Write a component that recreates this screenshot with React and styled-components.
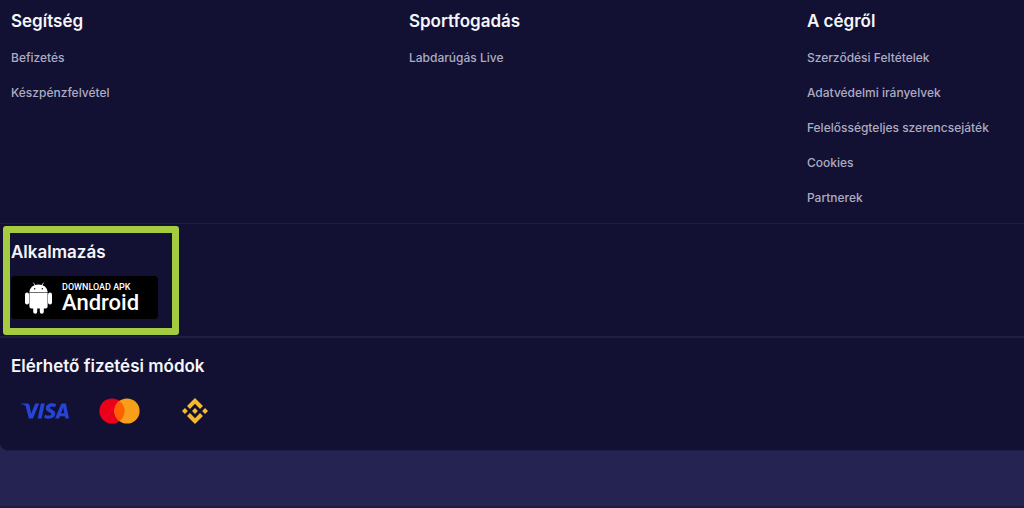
import React from 'react'
import styled, { createGlobalStyle } from 'styled-components'
import { SiBinance, SiVisa } from 'react-icons/si'

const GlobalStyle = createGlobalStyle`
  * {
    box-sizing: border-box;
  }

  body {
    margin: 0;
    background: #252352;
    font-family: Inter, 'Liberation Sans', sans-serif;
  }
`

const Page = styled.div`
  min-height: 100vh;
  display: flex;
  flex-direction: column;
  border-bottom: 2px solid #1f1b40;
`

const Footer = styled.footer`
  background: #121133;
  border-bottom: 1px solid #1f1d47;
  border-bottom-left-radius: 8px;
  color: #f6f6fa;
`

const Columns = styled.nav`
  display: grid;
  grid-template-columns: 11fr 11fr 6fr;
  padding: 9px 0 15px 11px;
`

const Title = styled.h2`
  margin: 0;
  font-size: 17px;
  font-weight: 600;
  line-height: 24px;
  white-space: nowrap;
`

const LinkList = styled.ul`
  display: flex;
  flex-direction: column;
  gap: 15px;
  list-style: none;
  margin: 15px 0 0;
  padding: 0;
`

const Item = styled.li`
  line-height: 20px;
`

const FooterLink = styled.a`
  display: block;
  color: #adacc2;
  font-size: 12px;
  font-weight: 500;
  text-decoration: none;
  white-space: nowrap;

  &:hover {
    color: #fff;
  }
`

const AppSection = styled.section`
  display: flex;
  border-top: 1px solid #1e1d40;
  border-bottom: 2px solid #201f43;
  padding: 2px 3px 1px;
`

const Highlight = styled.div`
  border: 7px solid #a5cb40;
  border-radius: 3px;
  padding: 7px 14px 9px 1px;
`

const ApkButton = styled.button`
  display: flex;
  align-items: center;
  gap: 10px;
  width: 147px;
  height: 43px;
  margin-top: 12px;
  padding: 0 0 0 14px;
  border: 0;
  border-radius: 4px;
  background: #000;
  color: #fff;
  font-family: Roboto, sans-serif;
  text-align: left;
  cursor: pointer;
`

const ApkLabel = styled.span`
  display: flex;
  flex-direction: column;
  font-size: 9px;
  font-weight: 500;
  line-height: 10px;
  white-space: nowrap;
`

const ApkName = styled.span`
  font-size: 22px;
  line-height: 22px;
`

const Payments = styled.section`
  padding: 16px 0 25px 11px;
`

const PaymentList = styled.ul`
  display: flex;
  align-items: center;
  list-style: none;
  margin: 19px 0 0;
  padding: 0 0 0 10px;
`

const Payment = styled.li`
  display: flex;
  align-items: center;
  height: 28px;
  margin-right: ${props => props.$space || 0}px;
  color: ${props => props.$color};
`

const VisaIcon = styled(SiVisa)`
  width: 48px;
  height: 48px;
`

const BinanceIcon = styled(SiBinance)`
  width: 26px;
  height: 26px;
`

const AndroidIcon = () => (
  <svg width="27" height="32" viewBox="0 0 27 32" fill="#fff" aria-hidden="true">
    <path d="M8.6 1l2 3M18.4 1l-2 3" stroke="#fff" strokeWidth="0.8" strokeLinecap="round" />
    <path d="M4.4 10.200C4.600 5.400 8.500 2.400 13.500 2.400S22.400 5.400 22.600 10.200z" />
    <circle cx="9.700" cy="6.700" r="0.700" fill="#000" />
    <circle cx="17.300" cy="6.700" r="0.700" fill="#000" />
    <rect x="0" y="10.400" width="4" height="12" rx="2" />
    <rect x="23" y="10.400" width="4" height="12" rx="2" />
    <path d="M4.400 10.800h18.200v13.600a2 2 0 0 1-2 2H18.800v3.400a2 2 0 0 1-4 0v-3.400h-2.600v3.400a2 2 0 0 1-4 0v-3.400H6.400a2 2 0 0 1-2-2z" />
  </svg>
)

const MastercardIcon = () => (
  <svg width="41" height="26" viewBox="0 0 41 26" role="img" aria-label="Mastercard">
    <circle cx="13" cy="13" r="12.600" fill="#eb001b" />
    <circle cx="28" cy="13" r="12.600" fill="#f79e1b" />
    <path d="M20.500 2.880a12.600 12.600 0 0 1 0 20.240a12.600 12.600 0 0 1 0-20.240z" fill="#ff5f00" />
  </svg>
)

const groups = [
  { title: 'Segítség', links: ['Befizetés', 'Készpénzfelvétel'] },
  { title: 'Sportfogadás', links: ['Labdarúgás Live'] },
  {
    title: 'A cégről',
    links: [
      'Szerződési Feltételek',
      'Adatvédelmi irányelvek',
      'Felelősségteljes szerencsejáték',
      'Cookies',
      'Partnerek',
    ],
  },
]

const App = () => (
  <Page>
    <GlobalStyle />
    <Footer>
      <Columns>
        {groups.map(group => (
          <div key={group.title}>
            <Title>{group.title}</Title>
            <LinkList>
              {group.links.map(link => (
                <Item key={link}>
                  <FooterLink href="#">{link}</FooterLink>
                </Item>
              ))}
            </LinkList>
          </div>
        ))}
      </Columns>
      <AppSection>
        <Highlight>
          <Title>Alkalmazás</Title>
          <ApkButton type="button">
            <AndroidIcon />
            <ApkLabel>
              DOWNLOAD APK
              <ApkName>Android</ApkName>
            </ApkLabel>
          </ApkButton>
        </Highlight>
      </AppSection>
      <Payments>
        <Title>Elérhető fizetési módok</Title>
        <PaymentList>
          <Payment $color="#2444d6" $space={30}>
            <VisaIcon role="img" aria-label="Visa" />
          </Payment>
          <Payment $space={42}>
            <MastercardIcon />
          </Payment>
          <Payment $color="#f3ba2f">
            <BinanceIcon role="img" aria-label="Binance" />
          </Payment>
        </PaymentList>
      </Payments>
    </Footer>
  </Page>
)

export default App
